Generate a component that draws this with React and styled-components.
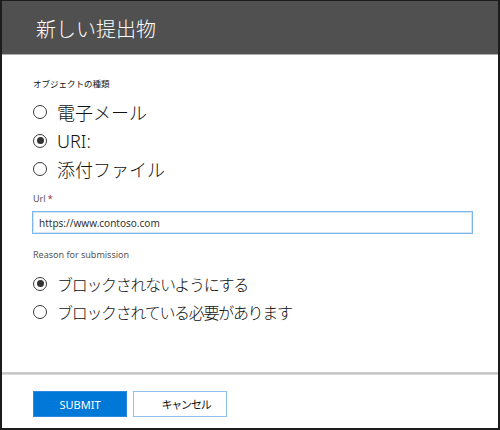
import React, { useState } from "react";
import styled, { createGlobalStyle } from "styled-components";

const Global = createGlobalStyle`
  html, body { margin: 0; padding: 0; background: #fff; }
  * { box-sizing: border-box; }
`;

const FONT = `"Segoe UI", "Noto Sans", "Noto Sans CJK JP", sans-serif`;
const JFONT = `"Noto Sans CJK JP", "Noto Sans", sans-serif`;

const Frame = styled.div`
  width: 500px;
  height: 430px;
  border-style: solid;
  border-color: #1c1c1c;
  border-width: 1px 2px 2px 2px;
  display: flex;
  flex-direction: column;
  font-family: ${FONT};
  color: #222;
`;

const Header = styled.header`
  height: 54px;
  flex: none;
  background: #505050;
  border-bottom: 1px solid #aeaeae;
  display: flex;
  align-items: center;
  padding: 2px 0 0 34px;
`;

const Title = styled.h1`
  margin: 0;
  font-family: ${JFONT};
  font-weight: 300;
  font-size: 20px;
  color: #fff;
`;

const Body = styled.main`
  flex: 1;
  padding: 22px 30px 0 30px;
  display: flex;
  flex-direction: column;
`;

const FieldLabel = styled.div`
  font-size: ${(p) => p.$size || 9}px;
  line-height: 12px;
  height: 12px;
  color: ${(p) => p.$color || "#222"};
  font-family: ${(p) => (p.$jp ? JFONT : FONT)};
  margin-top: ${(p) => p.$mt || 0}px;
  padding-left: 1px;
`;

const Req = styled.span`
  color: #a4262c;
  margin-left: 2px;
`;

const Group = styled.div`
  display: flex;
  flex-direction: column;
  margin-top: ${(p) => p.$mt || 0}px;
`;

const Row = styled.label`
  height: ${(p) => p.$h}px;
  display: flex;
  align-items: center;
  gap: 10px;
  padding-left: 1px;
  cursor: pointer;
`;

const Circle = styled.span`
  width: 14px;
  height: 14px;
  flex: none;
  border-radius: 50%;
  border: 1.5px solid #3a3a3a;
  background: #fff;
  display: flex;
  align-items: center;
  justify-content: center;
  &::after {
    content: "";
    width: 7px;
    height: 7px;
    border-radius: 50%;
    background: ${(p) => (p.$on ? "#333" : "transparent")};
  }
`;

const RowText = styled.span`
  font-family: ${(p) => (p.$latin ? FONT : JFONT)};
  font-weight: 300;
  font-size: ${(p) => p.$size}px;
  letter-spacing: ${(p) => p.$ls || 0}px;
  color: #111;
  line-height: 1;
`;

const Input = styled.input`
  margin-top: 6.5px;
  width: 441px;
  height: 23px;
  border: 1px solid #7fb6ea;
  box-shadow: inset 0 0 0 1px #d3e6f8;
  padding: 0 0 0 6px;
  font-family: ${FONT};
  font-size: 10px;
  color: #333;
  outline: none;
`;

const Footer = styled.footer`
  flex: none;
  display: flex;
  flex-direction: column;
`;

const Divider = styled.div`
  height: 3px;
  background: linear-gradient(#d4d4d4, #c4c4c4 50%, #e6e6e6);
`;

const Buttons = styled.div`
  display: flex;
  gap: 6px;
  padding: 16px 0 11px 31px;
`;

const Button = styled.button`
  width: 94px;
  height: 26px;
  border: 1px solid ${(p) => (p.$primary ? "#2b8ae0" : "#8cc0ee")};
  background: ${(p) => (p.$primary ? "#0078d7" : "#fff")};
  color: ${(p) => (p.$primary ? "#fff" : "#111")};
  font-family: ${(p) => (p.$primary ? FONT : JFONT)};
  font-size: 11px;
  letter-spacing: ${(p) => (p.$primary ? 0 : -1.2)}px;
  padding: ${(p) => (p.$primary ? "0" : "0 0 0 12px")};
  cursor: pointer;
`;

const types = [
  { id: "mail", label: "電子メール", h: 28.5 },
  { id: "uri", label: "URI:", h: 28.5, latin: true },
  { id: "file", label: "添付ファイル", h: 28.5 },
];

const reasons = [
  { id: "nb", label: "ブロックされないようにする" },
  { id: "b", label: "ブロックされている必要があります" },
];

export default function App() {
  const [type, setType] = useState("uri");
  const [reason, setReason] = useState("nb");
  return (
    <>
      <Global />
      <Frame>
        <Header>
          <Title>新しい提出物</Title>
        </Header>
        <Body>
          <FieldLabel $jp $size={8.5} $color="#111">
            オブジェクトの種類
          </FieldLabel>
          <Group $mt={9}>
            {types.map((t) => (
              <Row key={t.id} $h={t.h} onClick={() => setType(t.id)}>
                <Circle $on={type === t.id} />
                <RowText $size={18} $latin={t.latin}>
                  {t.label}
                </RowText>
              </Row>
            ))}
          </Group>
          <FieldLabel $mt={9} $color="#555">
            Url<Req>*</Req>
          </FieldLabel>
          <Input defaultValue="https://www.contoso.com" />
          <FieldLabel $mt={15} $color="#555">
            Reason for submission
          </FieldLabel>
          <Group $mt={8.5}>
            {reasons.map((r) => (
              <Row key={r.id} $h={28} onClick={() => setReason(r.id)}>
                <Circle $on={reason === r.id} />
                <RowText $size={16} $ls={-1.3}>
                  {r.label}
                </RowText>
              </Row>
            ))}
          </Group>
        </Body>
        <Footer>
          <Divider />
          <Buttons>
            <Button $primary>SUBMIT</Button>
            <Button>キャンセル</Button>
          </Buttons>
        </Footer>
      </Frame>
    </>
  );
}
